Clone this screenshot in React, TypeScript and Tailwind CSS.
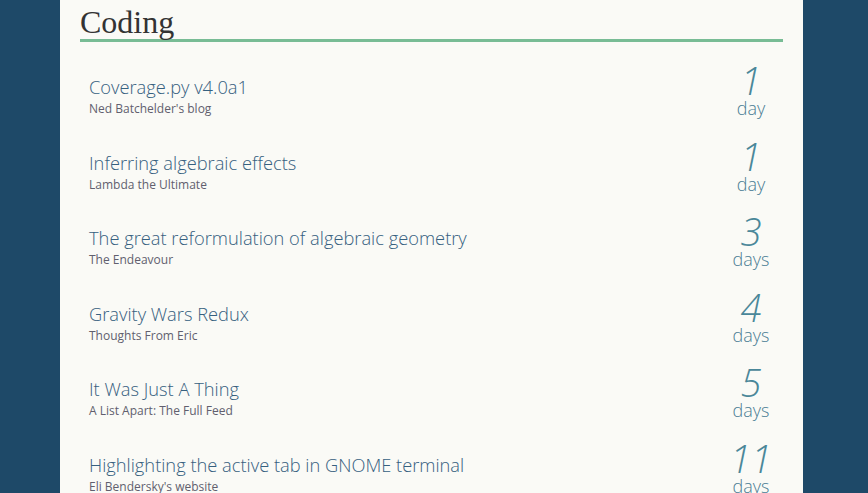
const items = [
  { title: "Coverage.py v4.0a1", source: "Ned Batchelder's blog", n: "1", unit: "day" },
  { title: "Inferring algebraic effects", source: "Lambda the Ultimate", n: "1", unit: "day" },
  { title: "The great reformulation of algebraic geometry", source: "The Endeavour", n: "3", unit: "days" },
  { title: "Gravity Wars Redux", source: "Thoughts From Eric", n: "4", unit: "days" },
  { title: "It Was Just A Thing", source: "A List Apart: The Full Feed", n: "5", unit: "days" },
  { title: "Highlighting the active tab in GNOME terminal", source: "Eli Bendersky's website", n: "11", unit: "days" },
];

const App = () => {
  return (
    <div className="h-[493px] overflow-hidden bg-[#1e4968]">
      <div className="ml-[60px] h-full w-[743px] bg-[#fafaf6] px-5" style={{ fontFamily: "'Open Sans', sans-serif" }}>
        <h2
          className="border-b-[3px] border-[#78bc95] pt-[5px] text-[32px] leading-[34px] text-[#333]"
          style={{ fontFamily: "'Liberation Serif', serif" }}
        >
          Coding
        </h2>
        <div className="mt-4">
          {items.map((item) => (
            <div key={item.title} className="flex h-[75.6px] items-start justify-between pl-[9px] pr-[7px]">
              <div className="mt-[15px]">
                <div className="text-[18.3px] font-light leading-[28px] text-[#36607f]">{item.title}</div>
                <div className="text-[12px] leading-4 text-[#615f6e]">{item.source}</div>
              </div>
              <div className="mt-[4px] w-[50px] text-center">
                <div className="text-[38px] font-light italic leading-[36px] text-[#4a8799]">{item.n}</div>
                <div className="text-[18px] font-light leading-5 text-[#4a7d94]">{item.unit}</div>
              </div>
            </div>
          ))}
        </div>
      </div>
    </div>
  );
};

export default App;
